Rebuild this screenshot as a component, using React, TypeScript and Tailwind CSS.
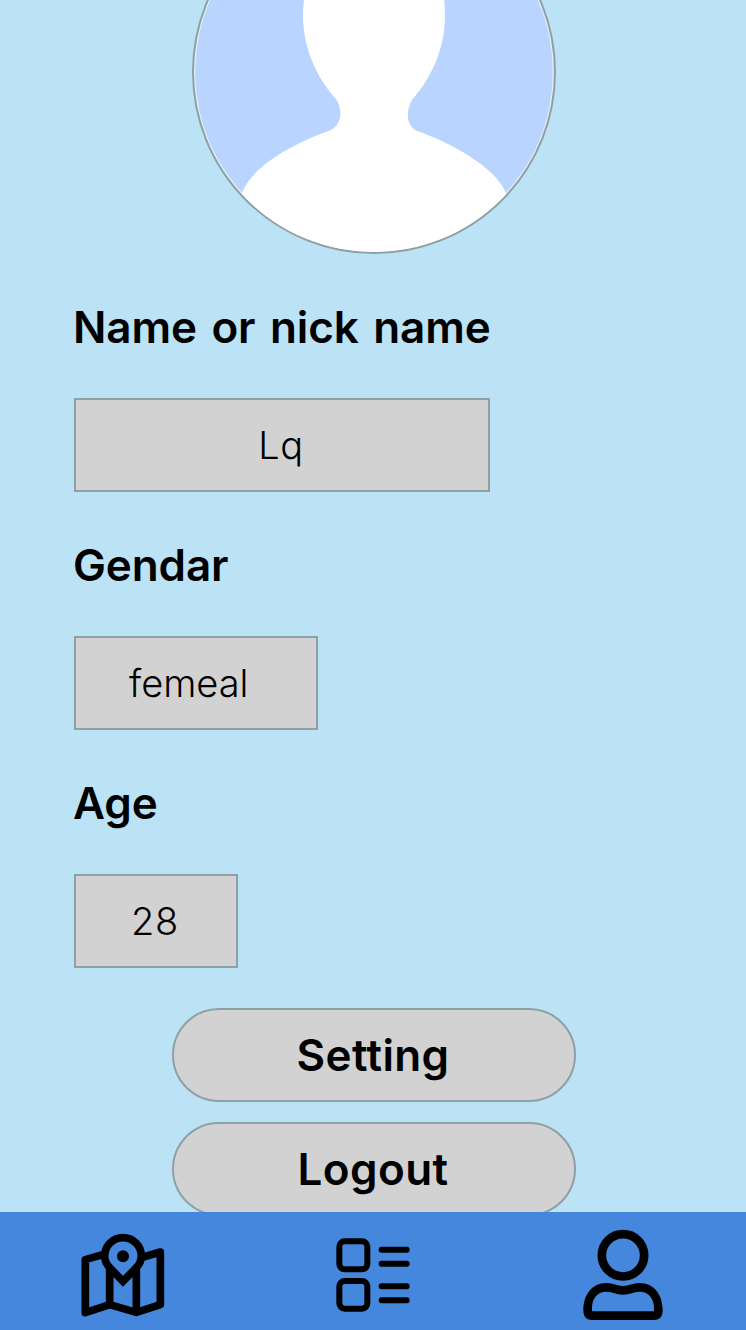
import React from "react";

function Avatar() {
  return (
    <div className="mx-auto -mt-[110px] size-[364px] shrink-0 overflow-hidden rounded-full border-2 border-[#8fa0a4] bg-[#e4f0fb]">
      <svg viewBox="194 -108 360 360" className="size-full" aria-hidden="true">
        <circle cx="374" cy="72" r="178.8" fill="#b9d5ff" />
        <path
          fill="#fff"
          d="M374-70C326-70 303-32 303 16C303 48 317 78 336 99C343 110 342 124 331 130C294 143 252 166 242 193L242 260H508L506 193C496 168 454 144 415 130C406 124 406 110 412 100C432 77 445 48 445 16C445-32 422-70 374-70Z"
        />
      </svg>
    </div>
  );
}

interface FieldProps {
  label: string;
  value: string;
  boxClass: string;
  valueClass?: string;
}

function Field({ label, value, boxClass, valueClass = "" }: FieldProps) {
  return (
    <div className="flex flex-col items-start">
      <div className="flex h-[144px] items-center">
        <label className="-ml-px pt-[2px] text-[44px] leading-none font-semibold tracking-[-0.1px] whitespace-nowrap [word-spacing:3.5px]">
          {label}
        </label>
      </div>
      <div className={`flex h-[94px] items-center border-2 border-[#8fa0a4] bg-[#d2d2d2] ${boxClass}`}>
        <span className={`text-[38px] leading-none font-light ${valueClass}`}>{value}</span>
      </div>
    </div>
  );
}

function PillButton({ children }: { children: React.ReactNode }) {
  return (
    <button className="flex h-[94px] w-[404px] shrink-0 items-center justify-center rounded-full border-2 border-[#8fa0a4] bg-[#d2d2d2] pr-[2px] text-[44px] leading-none font-semibold tracking-[0.4px]">
      {children}
    </button>
  );
}

const iconClass = "h-[118px] w-[110px] shrink-0";

function MapIcon() {
  return (
    <svg viewBox="0 6 330 354" className={iconClass} fill="none" stroke="#000" strokeWidth="23" strokeLinejoin="round" strokeLinecap="round">
      <path d="M98 134L46 149V308L119 284L199 307L271 284V126L220 141M119 180V284M199 180V307" />
      <path strokeLinejoin="miter" d="M159 214L120 174C108 162 104 151 104 138A55 55 0 0 1 214 138C214 151 210 162 198 174Z" />
      <circle cx="159" cy="139" r="18" fill="#000" stroke="none" />
    </svg>
  );
}

function ListIcon() {
  return (
    <svg viewBox="0 6 330 354" className={iconClass} fill="none" stroke="#000" strokeWidth="18" strokeLinecap="round">
      <rect x="58" y="94" width="84" height="84" rx="16" />
      <rect x="58" y="213" width="84" height="83" rx="16" />
      <path d="M185 119H260M185 161H260M185 229H260M185 271H260" />
    </svg>
  );
}

function PersonIcon() {
  return (
    <svg viewBox="0 6 330 354" className={iconClass}>
      <circle cx="159" cy="136" r="63.5" fill="none" stroke="#000" strokeWidth="26" />
      <path
        fillRule="evenodd"
        d="M40 300C40 254 66 219 109 219C130 219 141 228 159 228C177 228 188 219 209 219C252 219 278 254 278 300C278 320 270 330 252 330H66C48 330 40 320 40 300ZM66 304H252V294C252 267 237 245 209 245C190 245 180 254 159 254C138 254 128 245 109 245C81 245 66 267 66 294Z"
      />
    </svg>
  );
}

export default function App() {
  return (
    <div className="flex h-[1330px] w-[746px] flex-col overflow-hidden bg-[#bbe2f5] font-['Inter','Noto_Sans_CJK_JP',sans-serif] text-black">
      <main className="flex min-h-0 flex-1 flex-col overflow-hidden pl-[2px]">
        <Avatar />
        <div className="flex flex-col pl-[72px]">
          <Field label="Name or nick name" value="Lq" boxClass="w-[416px] justify-center pr-[2px]" valueClass="tracking-[0.5px]" />
          <Field label="Gendar" value="femeal" boxClass="w-[244px] pl-[53px]" />
          <Field label="Age" value="28" boxClass="w-[164px] pl-[55px]" valueClass="tracking-[0.6px]" />
        </div>
        <div className="mt-10 flex flex-col items-center gap-5">
          <PillButton>Setting</PillButton>
          <PillButton>Logout</PillButton>
        </div>
      </main>
      <nav className="flex h-[118px] shrink-0 gap-[140px] bg-[#4487dc] pl-[70px]">
        <MapIcon />
        <ListIcon />
        <PersonIcon />
      </nav>
    </div>
  );
}
